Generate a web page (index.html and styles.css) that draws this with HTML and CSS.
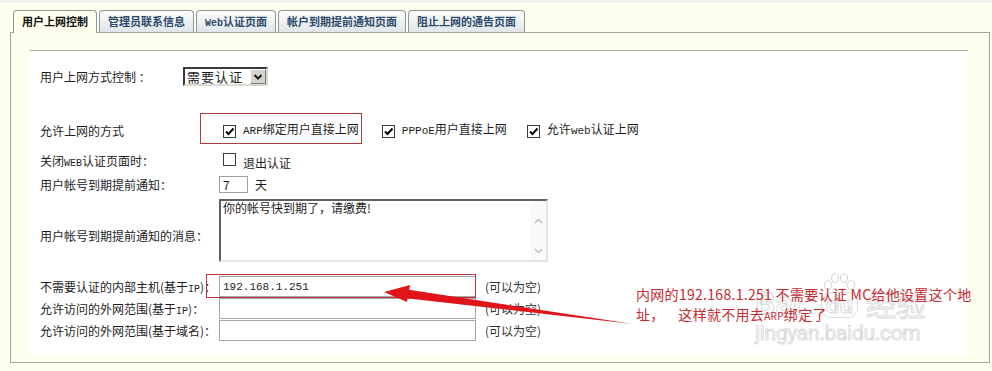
FILE: index.html
```html
<!DOCTYPE html>
<html lang="zh-CN">
<head>
    <meta charset="UTF-8">
    <title>用户上网控制</title>
    <link rel="stylesheet" href="styles.css">
</head>
<body>
<div class="page">
    <ul class="tabs">
        <li class="on">用户上网控制</li>
        <li>管理员联系信息</li>
        <li><span class="sm">Web</span>认证页面</li>
        <li>帐户到期提前通知页面</li>
        <li>阻止上网的通告页面</li>
    </ul>
    <div class="panel">
        <div class="box">
            <div class="row r-mode">
                <span class="lbl">用户上网方式控制 ：</span>
                <div class="sel">
                    <span class="sel-text">需要认证</span>
                    <span class="sel-btn">
                        <svg width="10" height="8" viewBox="0 0 10 8"><path d="M1.5 2 L5 5.5 L8.5 2" fill="none" stroke="#1a1a1a" stroke-width="2"/></svg>
                    </span>
                </div>
            </div>
            <div class="row opts r-allow">
                <span class="lbl">允许上网的方式</span>
                <span class="opt mark">
                    <span class="cb"><svg width="11" height="11" viewBox="0 0 11 11"><path d="M2 5.5 L4.5 8 L9.5 2.5" fill="none" stroke="#000" stroke-width="2"/></svg></span>
                    <span class="txt"><span class="sm">ARP</span>绑定用户直接上网</span>
                </span>
                <span class="opt">
                    <span class="cb"><svg width="11" height="11" viewBox="0 0 11 11"><path d="M2 5.5 L4.5 8 L9.5 2.5" fill="none" stroke="#000" stroke-width="2"/></svg></span>
                    <span class="txt"><span class="sm">PPPoE</span>用户直接上网</span>
                </span>
                <span class="opt">
                    <span class="cb"><svg width="11" height="11" viewBox="0 0 11 11"><path d="M2 5.5 L4.5 8 L9.5 2.5" fill="none" stroke="#000" stroke-width="2"/></svg></span>
                    <span class="txt">允许<span class="sm">web</span>认证上网</span>
                </span>
            </div>
            <div class="row opts r-close">
                <span class="lbl">关闭<span class="sm">WEB</span>认证页面时：</span>
                <span class="opt">
                    <span class="cb"></span>
                    <span class="txt">退出认证</span>
                </span>
            </div>
            <div class="row r-days">
                <span class="lbl">用户帐号到期提前通知：</span>
                <input class="in-days" type="text" value="7">
                <span class="unit">天</span>
            </div>
            <div class="row r-msg">
                <span class="lbl">用户帐号到期提前通知的消息：</span>
                <div class="tarea">
                    <div class="tarea-text">你的帐号快到期了，请缴费!</div>
                    <div class="sbar">
                        <svg width="9" height="6" viewBox="0 0 9 6"><path d="M1 5 L4.5 1.5 L8 5" fill="none" stroke="#bdbdbd" stroke-width="1.5"/></svg>
                        <svg width="9" height="6" viewBox="0 0 9 6"><path d="M1 1 L4.5 4.5 L8 1" fill="none" stroke="#bdbdbd" stroke-width="1.5"/></svg>
                    </div>
                </div>
            </div>
            <div class="row r-ip first">
                <span class="lbl">不需要认证的内部主机(基于<span class="sm">IP</span>)：</span>
                <input class="in-ip" type="text" value="192.168.1.251">
                <span class="note">(可以为空)</span>
            </div>
            <div class="row r-ip">
                <span class="lbl">允许访问的外网范围(基于<span class="sm">IP</span>)：</span>
                <input class="in-ip" type="text" value="">
                <span class="note">(可以为空)</span>
            </div>
            <div class="row r-ip">
                <span class="lbl">允许访问的外网范围(基于域名)：</span>
                <input class="in-ip" type="text" value="">
                <span class="note">(可以为空)</span>
            </div>
        </div>
    </div>

    <!-- 水印 -->
    <div class="wm">
        <div class="wm-top">
            <span class="wm-bai">Bai</span>
            <span class="wm-paw">
                <svg width="34" height="20" viewBox="0 0 34 20">
                    <ellipse cx="6" cy="13" rx="3.5" ry="4.5" fill="none" stroke="#d8d8d8" stroke-width="1.2"/>
                    <ellipse cx="13" cy="6" rx="3.5" ry="4.5" fill="none" stroke="#d8d8d8" stroke-width="1.2"/>
                    <ellipse cx="22" cy="6" rx="3.5" ry="4.5" fill="none" stroke="#d8d8d8" stroke-width="1.2"/>
                    <ellipse cx="29" cy="13" rx="3.5" ry="4.5" fill="none" stroke="#d8d8d8" stroke-width="1.2"/>
                </svg>
                <span class="wm-du">du</span>
            </span>
            <span class="wm-jy">经验</span>
        </div>
        <div class="wm-url">jingyan.baidu.com</div>
    </div>

    <!-- 标注 -->
    <div class="ann-box"></div>
    <svg class="arrow" width="260" height="50" viewBox="380 278 260 50">
        <polygon points="404,289 633,324 404,298" fill="#e0151b"/>
        <polygon points="384,292 410,285 407,302" fill="#e0151b"/>
    </svg>
    <div class="ann-text">内网的192.168.1.251 不需要认证 MC给他设置这个地<br>址，&nbsp;&nbsp;&nbsp;&nbsp;这样就不用去<span class="ann-sm">ARP</span>绑定了</div>
</div>
</body>
</html>
```

FILE: styles.css
```css
*{
    margin: 0;
    padding: 0;
    box-sizing: border-box;
}
body{
    background: linear-gradient(#f1f2ee 0, #f1f2ee 3px, #fefeee 3px);
    font-family: "Noto Sans CJK SC", "Noto Sans", sans-serif;
    font-size: 12px;
    color: #1e1e1e;
}
.page{
    position: relative;
    width: 992px;
    height: 371px;
    padding-top: 10px;
}
.sm{
    font-family: "Liberation Mono", monospace;
    font-size: 11px;
}
/* 标签页 */
.tabs{
    list-style: none;
    display: flex;
    gap: 2px;
    padding-left: 13px;
    height: 22px;
}
.tabs li{
    height: 22px;
    padding: 0 8px;
    border: 1px solid #8e969c;
    border-bottom: none;
    border-radius: 4px 4px 0 0;
    background: linear-gradient(#fdfdfd, #e1e5e9);
    color: #2d4a6b;
    font-size: 11px;
    font-weight: bold;
    line-height: 21px;
    white-space: nowrap;
}
.tabs li .sm{
    font-size: 10px;
    font-weight: bold;
}
.tabs li.on{
    height: 23px;
    background: #fefeee;
    color: #111;
    position: relative;
    z-index: 1;
}
.panel{
    margin: 0 2px 0 10px;
    border: 1px solid #a4a597;
    padding: 17px 21px 7px 19px;
}
.box{
    height: 305px;
    background: #fff;
    border-top: 1px solid #a9aa9e;
    padding-left: 10px;
}
/* 表单行 */
.row{
    display: flex;
    align-items: center;
}
.lbl{
    width: 179px;
    flex: none;
    white-space: nowrap;
}
.lbl .sm{
    font-size: 10px;
}
.r-mode{
    margin-top: 16px;
    height: 19px;
}
.r-mode .lbl{
    width: 143px;
}
.sel{
    display: flex;
    width: 85px;
    height: 19px;
    border: 2px solid;
    border-color: #3a3a3a #dcd9d0 #dcd9d0 #3a3a3a;
    background: #fff;
}
.sel-text{
    flex: 1;
    padding-left: 2px;
    font-size: 13px;
    letter-spacing: 1px;
    line-height: 15px;
}
.sel-btn{
    width: 16px;
    border: 1px solid;
    border-color: #fff #7c7c7c #7c7c7c #fff;
    background: #d6d3cb;
    display: flex;
    align-items: center;
    justify-content: center;
}
.opts{
    align-items: stretch;
}
.opts .lbl{
    align-self: center;
}
.opt{
    display: flex;
    align-items: flex-end;
    padding-bottom: 6px;
    margin-left: 18px;
    white-space: nowrap;
}
.opt + .opt{
    margin-left: 20px;
}
.cb{
    width: 13px;
    height: 13px;
    flex: none;
    border: 1px solid #3a3a3a;
    background: #fff;
    display: flex;
    align-items: center;
    justify-content: center;
}
.opt .cb{
    margin-right: 7px;
}
.opt .txt{
    line-height: 14px;
}
.r-allow{
    margin-top: 27px;
    height: 31px;
}
.r-allow .lbl{
    padding-top: 3px;
}
.mark{
    margin-left: -19px;
    padding: 0 2px 5px 22px;
    border: 1px solid #b5393c;
}
.r-close{
    margin-top: 6px;
    height: 20px;
}
.r-close .opt{
    margin-left: 4px;
    padding-bottom: 4px;
}
.r-close .opt .txt{
    margin-bottom: -4px;
}
.r-days{
    margin-top: 5px;
    height: 19px;
}
input{
    font-family: inherit;
    font-size: 12px;
    color: #1e1e1e;
    outline: none;
}
.in-days{
    width: 29px;
    height: 17px;
    border: 1px solid #a0a0a0;
    padding-left: 3px;
}
.unit{
    margin-left: 7px;
}
.r-msg{
    margin-top: 5px;
    height: 63px;
}
.r-msg .lbl{
    padding-top: 10px;
}
.tarea{
    display: flex;
    width: 329px;
    height: 63px;
    border: 2px solid;
    border-color: #606060 #e4e4e4 #e4e4e4 #606060;
    background: #fff;
}
.tarea-text{
    flex: 1;
    padding-left: 2px;
    line-height: 13px;
}
.sbar{
    width: 15px;
    display: flex;
    flex-direction: column;
    justify-content: space-between;
    align-items: center;
    padding: 17px 0 6px;
    background: #fafafa;
}
.r-ip{
    margin-top: 1px;
    height: 21px;
}
.r-ip.first{
    margin-top: 14px;
}
.in-ip{
    width: 257px;
    height: 21px;
    border: 1px solid #a6a6a6;
    padding-left: 3px;
    font-family: "Liberation Mono", monospace;
    font-size: 11px;
}
.note{
    margin-left: 9px;
    color: #333;
}
/* 水印 */
.wm{
    position: absolute;
    left: 755px;
    top: 266px;
    color: rgba(248, 248, 248, 0.5);
    -webkit-text-stroke: 1px rgba(205, 205, 205, 0.7);
    font-family: Roboto, "Noto Sans CJK SC", sans-serif;
}
.wm-top{
    display: flex;
    align-items: flex-end;
    height: 52px;
}
.wm-bai{
    font-size: 32px;
    font-weight: bold;
    line-height: 30px;
}
.wm-paw{
    display: flex;
    flex-direction: column;
    align-items: center;
    margin-left: 20px;
}
.wm-du{
    font-size: 24px;
    font-weight: bold;
    line-height: 24px;
    padding: 0 4px;
    border: 1px solid rgba(205, 205, 205, 0.7);
    border-radius: 10px;
}
.wm-jy{
    margin-left: 8px;
    font-size: 30px;
    line-height: 30px;
    font-family: "Noto Sans CJK SC", sans-serif;
}
.wm-url{
    margin-top: 4px;
    font-size: 21px;
    line-height: 22px;
    letter-spacing: -0.3px;
}
/* 标注 */
.ann-box{
    position: absolute;
    left: 206px;
    top: 274px;
    width: 270px;
    height: 24px;
    border: 1px solid #b8383a;
}
.arrow{
    position: absolute;
    left: 380px;
    top: 278px;
}
.ann-text{
    position: absolute;
    left: 636px;
    top: 284px;
    font-size: 14px;
    line-height: 20px;
    letter-spacing: 0.3px;
    color: #c4292f;
    white-space: nowrap;
}
.ann-sm{
    font-size: 10px;
}
```
